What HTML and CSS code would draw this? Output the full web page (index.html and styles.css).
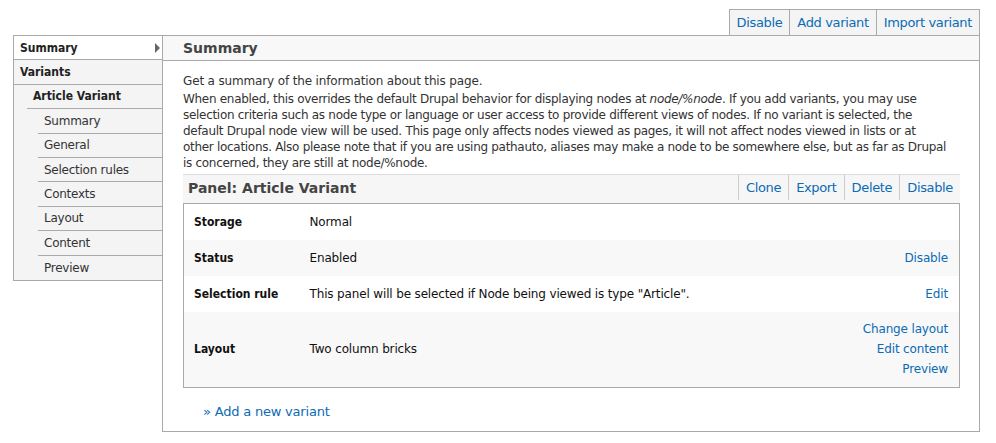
FILE: index.html
```html
<!DOCTYPE html>
<html>
<head>
<meta charset="utf-8">
<link rel="stylesheet" href="styles.css">
</head>
<body>
<div class="page">
  <div class="top-actions">
    <a href="#" class="btn">Disable</a><a href="#" class="btn">Add variant</a><a href="#" class="btn">Import variant</a>
  </div>
  <div class="layout">
    <nav class="sidebar">
      <ul class="nav nav-l1">
        <li class="item active"><span class="t b">Summary</span><span class="arrow"></span></li>
        <li class="item-group">
          <div class="item"><span class="t b">Variants</span></div>
          <ul class="nav nav-l2">
            <li class="item-group">
              <div class="item"><span class="t b">Article Variant</span></div>
              <ul class="nav nav-l3">
                <li class="item"><span class="t">Summary</span></li>
                <li class="item"><span class="t">General</span></li>
                <li class="item"><span class="t">Selection rules</span></li>
                <li class="item"><span class="t">Contexts</span></li>
                <li class="item"><span class="t">Layout</span></li>
                <li class="item"><span class="t">Content</span></li>
                <li class="item last"><span class="t">Preview</span></li>
              </ul>
            </li>
          </ul>
        </li>
      </ul>
    </nav>
    <main class="main">
      <h2 class="main-title">Summary</h2>
      <div class="main-body">
        <p class="intro">Get a summary of the information about this page.</p>
        <p class="desc">When enabled, this overrides the default Drupal behavior for displaying nodes at <em>node/%node</em>. If you add variants, you may use<br>selection criteria such as node type or language or user access to provide different views of nodes. If no variant is selected, the<br>default Drupal node view will be used. This page only affects nodes viewed as pages, it will not affect nodes viewed in lists or at<br>other locations. Also please note that if you are using pathauto, aliases may make a node to be somewhere else, but as far as Drupal<br>is concerned, they are still at node/%node.</p>
        <section class="panel">
          <div class="panel-head">
            <h3 class="panel-title">Panel: Article Variant</h3>
            <div class="panel-actions">
              <a href="#" class="pbtn">Clone</a><a href="#" class="pbtn">Export</a><a href="#" class="pbtn">Delete</a><a href="#" class="pbtn">Disable</a>
            </div>
          </div>
          <table class="info">
            <tr class="odd">
              <th>Storage</th><td class="val">Normal</td><td class="ops"></td>
            </tr>
            <tr class="even">
              <th>Status</th><td class="val">Enabled</td><td class="ops"><a href="#">Disable</a></td>
            </tr>
            <tr class="odd">
              <th>Selection rule</th><td class="val">This panel will be selected if Node being viewed is type "Article".</td><td class="ops"><a href="#">Edit</a></td>
            </tr>
            <tr class="even tall">
              <th>Layout</th><td class="val">Two column bricks</td><td class="ops"><a href="#">Change layout</a><br><a href="#">Edit content</a><br><a href="#">Preview</a></td>
            </tr>
          </table>
        </section>
        <a href="#" class="add-link">» Add a new variant</a>
      </div>
    </main>
  </div>
</div>
</body>
</html>
```
FILE: styles.css
```css
* { box-sizing: border-box; }
html, body { margin: 0; padding: 0; background: #fff; }
body {
  font-family: "DejaVu Sans", Verdana, sans-serif;
  font-size: 12px;
  letter-spacing: -0.15px;
  color: #333;
}
a { color: #0b6bb5; text-decoration: none; }
p, h2, h3, ul { margin: 0; padding: 0; }
ul { list-style: none; }

.page { padding: 9px 16px 0 13px; }

.top-actions {
  display: flex;
  justify-content: flex-end;
}
.top-actions .btn {
  display: block;
  height: 26px;
  line-height: 25px;
  padding: 0 7px;
  background: #f4f4f4;
  border: 1px solid #aaa;
  border-bottom: none;
  border-left: none;
  font-size: 13px;
  letter-spacing: -0.35px;
}
.top-actions .btn:first-child { border-left: 1px solid #aaa; }

.layout { display: flex; align-items: flex-start; }

.sidebar {
  width: 149px;
  flex: none;
  border: 1px solid #aaa;
  border-right: none;
  background: #f4f4f4;
  font-family: "DejaVu Sans Condensed", "DejaVu Sans", sans-serif;
}
.nav .item {
  display: flex;
  align-items: center;
  height: 24.4px;
  border-bottom: 1px solid #aaa;
  padding-left: 6px;
  font-size: 12px;
  letter-spacing: 0;
  color: #333;
}
.nav .item .b { font-weight: bold; color: #222; }
.nav .item.active { background: #fff; justify-content: space-between; padding-right: 2px; }
.nav .item.last { border-bottom: none; }
.arrow {
  width: 0; height: 0;
  border-top: 5px solid transparent;
  border-bottom: 5px solid transparent;
  border-left: 5px solid #666;
}
.nav-l2 { margin-left: 13px; }
.nav-l3 { margin-left: 11px; }
.nav-l3 .item { font-family: "DejaVu Sans", sans-serif; letter-spacing: -0.25px; }

.main {
  flex: 1;
  border: 1px solid #aaa;
  height: 397px;
}
.main-title {
  height: 25px;
  line-height: 24px;
  background: #f8f8f8;
  border-bottom: 1px solid #aaa;
  padding-left: 20px;
  font-size: 14px;
  font-weight: bold;
  color: #444;
  letter-spacing: 0;
}
.main-body { padding: 12px 19px 0 20px; }
.intro { line-height: 16px; margin-bottom: 2px; }
.desc { line-height: 16px; letter-spacing: -0.3px; white-space: nowrap; }
.desc em { font-style: italic; }

.panel { margin-top: 3px; }
.panel-head {
  display: flex;
  justify-content: space-between;
  align-items: stretch;
  height: 29px;
  background: #f6f6f6;
  border-top: 1px solid #ddd;
}
.panel-title {
  padding-left: 5px;
  font-size: 14px;
  font-weight: bold;
  color: #444;
  letter-spacing: 0;
  line-height: 26px;
}
.panel-actions { display: flex; padding-bottom: 3px; }
.pbtn {
  display: block;
  line-height: 25px;
  padding: 0 7px;
  border-left: 1px solid #ccc;
  font-size: 13px;
  letter-spacing: -0.35px;
}

.info {
  width: 100%;
  border-collapse: collapse;
  border: 1px solid #aaa;
}
.info tr { height: 36px; }
.info tr.tall { height: 76px; }
.info tr.odd { background: #fff; }
.info tr.even { background: #f8f8f8; }
.info th {
  text-align: left;
  width: 126px;
  padding: 0 0 0 10px;
  font-family: "DejaVu Sans Condensed", "DejaVu Sans", sans-serif;
  font-weight: bold;
  color: #111;
  letter-spacing: 0;
}
.info td.val { color: #111; padding: 0; }
.info td.ops { text-align: right; padding: 0 11px 0 0; line-height: 20px; white-space: nowrap; }

.add-link {
  display: inline-block;
  margin: 16px 0 0 20px;
  font-size: 13px;
  letter-spacing: -0.2px;
}
```
